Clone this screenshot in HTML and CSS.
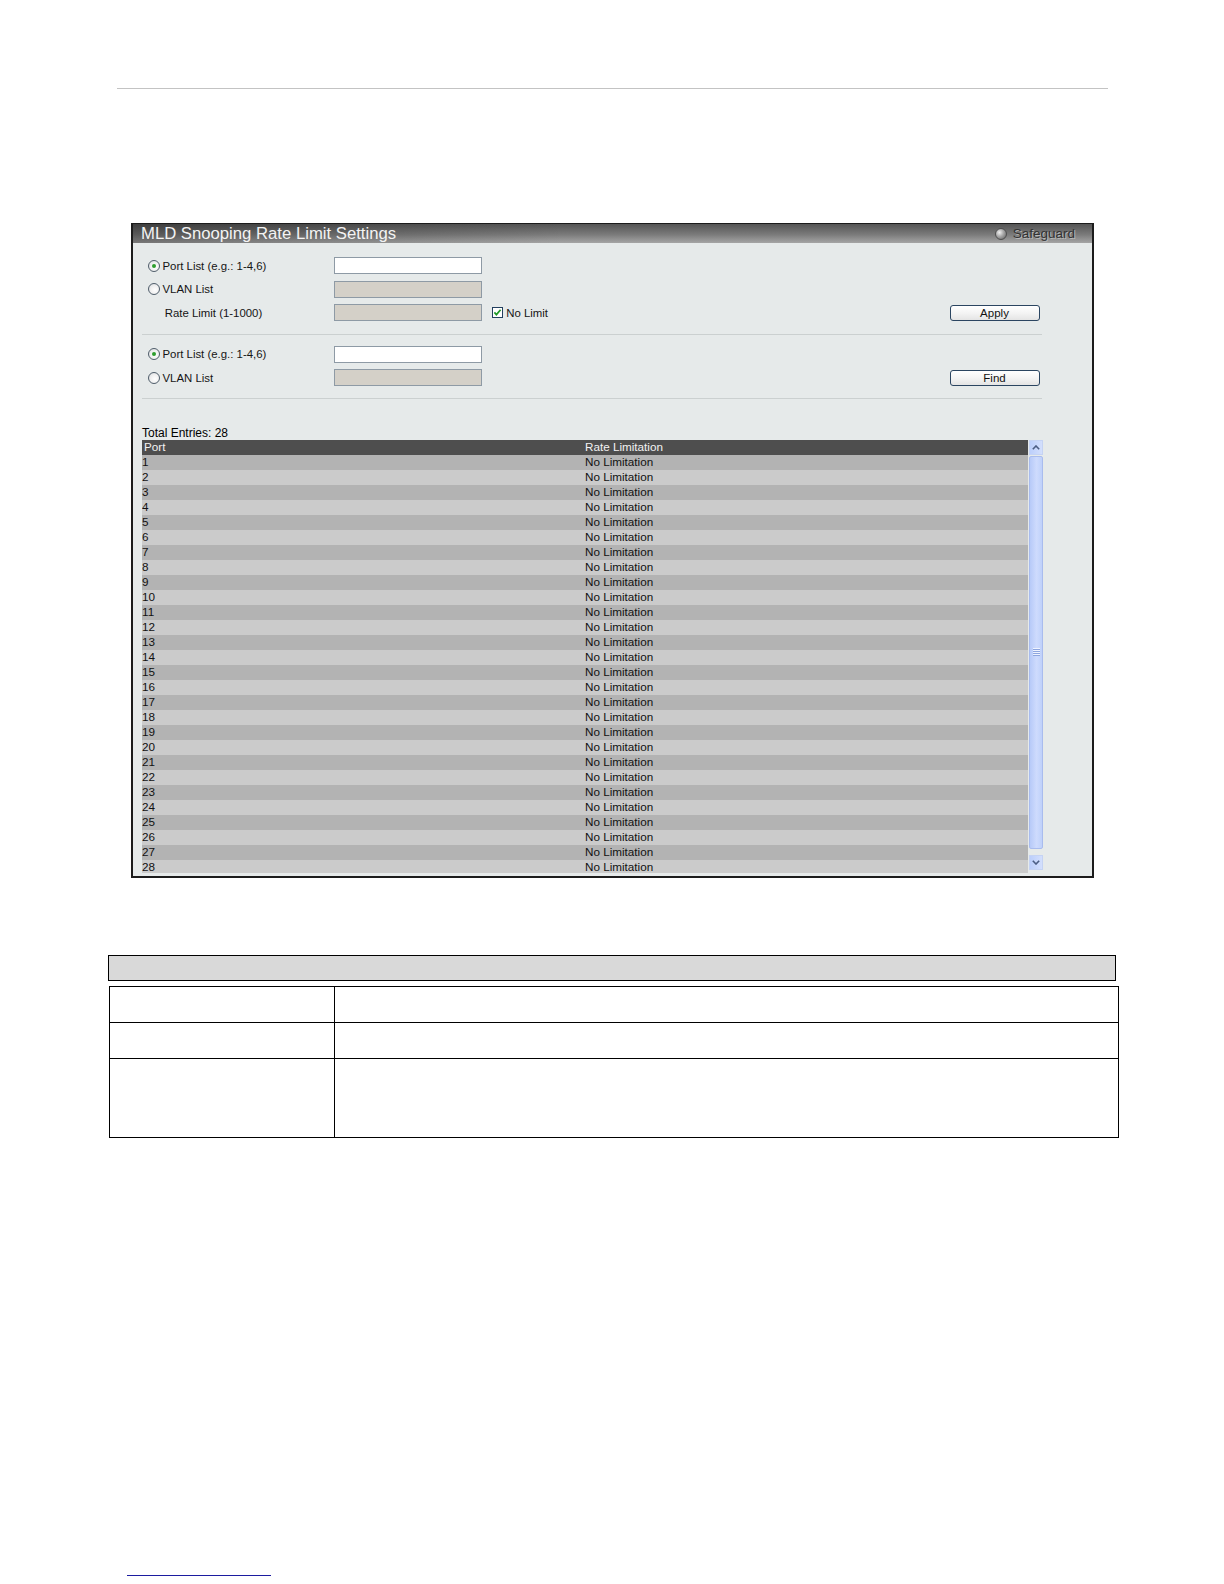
FILE: index.html
```html
<!DOCTYPE html>
<html>
<head>
<meta charset="utf-8">
<title>MLD Snooping Rate Limit Settings</title>
<link rel="stylesheet" href="styles.css">
</head>
<body>
<div class="page">
  <div class="rule"></div>

  <div class="panel">
    <div class="panel-title">
      <span class="title-text">MLD Snooping Rate Limit Settings</span>
      <span class="safeguard"><span class="sg-dot"></span>Safeguard</span>
    </div>
    <div class="panel-body">
      <div class="form">
        <div class="row">
          <div class="label"><span class="radio checked"></span>Port List (e.g.: 1-4,6)</div>
          <div class="input"></div>
        </div>
        <div class="row">
          <div class="label"><span class="radio"></span>VLAN List</div>
          <div class="input disabled"></div>
        </div>
        <div class="row">
          <div class="label indent">Rate Limit (1-1000)</div>
          <div class="input disabled"></div>
          <svg class="chk" width="11" height="11" viewBox="0 0 11 11"><rect x="0.5" y="0.5" width="10" height="10" fill="#fff" stroke="#23405e"/><path d="M2.4 5.4 L4.4 7.6 L8.6 2.8" fill="none" stroke="#1f9a26" stroke-width="1.7"/></svg>
          <span class="chk-label">No Limit</span>
          <span class="btn">Apply</span>
        </div>
      </div>
      <div class="sep"></div>
      <div class="form">
        <div class="row">
          <div class="label"><span class="radio checked"></span>Port List (e.g.: 1-4,6)</div>
          <div class="input"></div>
        </div>
        <div class="row">
          <div class="label"><span class="radio"></span>VLAN List</div>
          <div class="input disabled"></div>
          <span class="btn">Find</span>
        </div>
      </div>
      <div class="sep sep2"></div>

      <div class="total">Total Entries: 28</div>
      <div class="list">
        <div class="list-view">
          <table class="grid">
            <thead>
              <tr><th class="c1">Port</th><th>Rate Limitation</th></tr>
            </thead>
            <tbody>
              <tr><td class="c1">1</td><td>No Limitation</td></tr>
              <tr><td class="c1">2</td><td>No Limitation</td></tr>
              <tr><td class="c1">3</td><td>No Limitation</td></tr>
              <tr><td class="c1">4</td><td>No Limitation</td></tr>
              <tr><td class="c1">5</td><td>No Limitation</td></tr>
              <tr><td class="c1">6</td><td>No Limitation</td></tr>
              <tr><td class="c1">7</td><td>No Limitation</td></tr>
              <tr><td class="c1">8</td><td>No Limitation</td></tr>
              <tr><td class="c1">9</td><td>No Limitation</td></tr>
              <tr><td class="c1">10</td><td>No Limitation</td></tr>
              <tr><td class="c1">11</td><td>No Limitation</td></tr>
              <tr><td class="c1">12</td><td>No Limitation</td></tr>
              <tr><td class="c1">13</td><td>No Limitation</td></tr>
              <tr><td class="c1">14</td><td>No Limitation</td></tr>
              <tr><td class="c1">15</td><td>No Limitation</td></tr>
              <tr><td class="c1">16</td><td>No Limitation</td></tr>
              <tr><td class="c1">17</td><td>No Limitation</td></tr>
              <tr><td class="c1">18</td><td>No Limitation</td></tr>
              <tr><td class="c1">19</td><td>No Limitation</td></tr>
              <tr><td class="c1">20</td><td>No Limitation</td></tr>
              <tr><td class="c1">21</td><td>No Limitation</td></tr>
              <tr><td class="c1">22</td><td>No Limitation</td></tr>
              <tr><td class="c1">23</td><td>No Limitation</td></tr>
              <tr><td class="c1">24</td><td>No Limitation</td></tr>
              <tr><td class="c1">25</td><td>No Limitation</td></tr>
              <tr><td class="c1">26</td><td>No Limitation</td></tr>
              <tr><td class="c1">27</td><td>No Limitation</td></tr>
              <tr><td class="c1">28</td><td>No Limitation</td></tr>
            </tbody>
          </table>
        </div>
        <div class="sb">
          <div class="sb-btn"><svg width="8" height="5" viewBox="0 0 8 5"><path d="M0.8 4.2 L4 1 L7.2 4.2" fill="none" stroke="#4b5d84" stroke-width="1.6"/></svg></div>
          <div class="sb-thumb"><svg width="7" height="8" viewBox="0 0 7 8"><path d="M0 0.5 H7 M0 2.5 H7 M0 4.5 H7 M0 6.5 H7" stroke="#eef3ff" stroke-width="1"/><path d="M0 1.5 H7 M0 3.5 H7 M0 5.5 H7 M0 7.5 H7" stroke="#8ea6df" stroke-width="1"/></svg></div>
          <div class="sb-btn"><svg width="8" height="5" viewBox="0 0 8 5"><path d="M0.8 0.8 L4 4 L7.2 0.8" fill="none" stroke="#4b5d84" stroke-width="1.6"/></svg></div>
        </div>
      </div>
    </div>
  </div>

  <div class="spec-head"></div>
  <table class="spec">
    <tr class="r1"><td class="s1"></td><td></td></tr>
    <tr class="r2"><td class="s1"></td><td></td></tr>
    <tr class="r3"><td class="s1"></td><td></td></tr>
  </table>

  <div class="foot-line"></div>
</div>
</body>
</html>
```

FILE: styles.css
```css
html, body {
  margin: 0;
  padding: 0;
  background: #ffffff;
}

body {
  font-family: "Liberation Sans", Arial, sans-serif;
  color: #111;
}

.page {
  width: 1224px;
  overflow: hidden;
}

.rule {
  margin: 88px 0 0 117px;
  width: 991px;
  border-top: 1px solid #c3c3c3;
}

/* ---------- panel ---------- */
.panel {
  margin: 134px 0 0 131px;
  width: 959px;
  border: 2px solid #1c1c1c;
  border-top-width: 1px;
  background: #e6eaea;
}

.panel-title {
  height: 19px;
  display: flex;
  align-items: center;
  justify-content: space-between;
  padding: 0 17px 0 8px;
  background:
    linear-gradient(to right, rgba(0,0,0,0.28), rgba(0,0,0,0) 45%),
    linear-gradient(to bottom, #555555 0%, #7a7a7a 55%, #a5a5a5 100%);
}

.title-text {
  font-size: 16.7px;
  line-height: 19px;
  color: #f3f3f3;
  white-space: nowrap;
}

.safeguard {
  display: flex;
  align-items: center;
  gap: 6px;
  font-size: 13.5px;
  color: #333333;
  text-shadow: 1px 1px 0 #b9b9b9;
}

.sg-dot {
  width: 10px;
  height: 10px;
  border-radius: 50%;
  border: 1px solid #4e4e4e;
  background: radial-gradient(circle at 35% 35%, #f0f0f0 0%, #a6a6a6 45%, #5a5a5a 100%);
}

.panel-body {
  padding: 11px 0 2.7px 9px;
}

.form {
  width: 900px;
}

.row {
  height: 23.5px;
  display: flex;
  align-items: center;
  padding-left: 5.5px;
}

.label {
  width: 186.5px;
  flex: none;
  display: flex;
  align-items: center;
  font-size: 11.4px;
  color: #151515;
  white-space: nowrap;
}

.label.indent {
  padding-left: 17.2px;
  box-sizing: border-box;
}

.radio {
  width: 12px;
  height: 12px;
  box-sizing: border-box;
  border-radius: 50%;
  border: 1px solid #4f5d6a;
  background: radial-gradient(circle at 60% 60%, #ffffff 0%, #f0f0f0 50%, #d2d6da 100%);
  margin-right: 3px;
  display: flex;
  align-items: center;
  justify-content: center;
  flex: none;
}

.radio.checked::after {
  content: "";
  width: 4px;
  height: 4px;
  border-radius: 50%;
  background: #2e9e2e;
}

.input {
  width: 148px;
  height: 17px;
  box-sizing: border-box;
  border: 1px solid #8e9aa5;
  background: #ffffff;
  flex: none;
}

.input.disabled {
  background: #d4d0c8;
}

.chk {
  margin-left: 9.7px;
  flex: none;
}

.chk-label {
  margin-left: 3.5px;
  font-size: 11.4px;
  color: #151515;
}

.btn {
  margin-left: auto;
  margin-right: 2.5px;
  width: 90px;
  height: 16px;
  box-sizing: border-box;
  border: 1px solid #2b4561;
  border-radius: 3px;
  background: linear-gradient(to bottom, #ffffff 0%, #f4f4f4 50%, #e4e4e4 100%);
  font-size: 11.5px;
  line-height: 14px;
  text-align: center;
  color: #111;
}

.sep {
  width: 900px;
  border-top: 1px solid #cbd0d0;
  margin: 9px 0 8.2px;
}

.sep2 {
  margin: 8px 0 0;
}

.total {
  margin-top: 27px;
  font-size: 12px;
  line-height: 14px;
  color: #000;
}

/* ---------- list ---------- */
.list {
  margin-top: 0.3px;
  width: 901.3px;
  height: 433px;
  display: flex;
  gap: 1px;
}

.list-view {
  flex: 1;
  height: 433px;
  overflow: hidden;
}

.grid {
  width: 100%;
  border-collapse: collapse;
  font-size: 11.7px;
}

.grid th,
.grid td {
  height: 15px;
  padding: 0 0 0 2px;
  line-height: 13px;
  vertical-align: top;
  text-align: left;
  font-weight: normal;
  white-space: nowrap;
}

.grid td {
  padding-left: 0;
}

.grid td:last-child,
.grid th:last-child {
  padding-left: 2px;
}

.grid .c1 {
  width: 439px;
}

.grid thead tr {
  background: #4e4e4e;
  color: #f2f2f2;
}

.grid tbody tr {
  color: #111;
}

.grid tbody tr:nth-child(odd) {
  background: #b3b3b3;
}

.grid tbody tr:nth-child(even) {
  background: #cbcbcb;
}

/* ---------- scrollbar ---------- */
.sb {
  width: 14px;
  height: 430px;
  display: flex;
  flex-direction: column;
  flex: none;
}

.sb-btn {
  height: 15px;
  box-sizing: border-box;
  border: 1px solid #ffffff;
  outline: 1px solid #c5d3f3;
  outline-offset: -1px;
  background: linear-gradient(to right, #bccffb, #d3dffd);
  display: flex;
  align-items: center;
  justify-content: center;
  flex: none;
}

.sb-thumb {
  flex: 1;
  margin: 1px 0 6px;
  box-sizing: border-box;
  border: 1px solid #a9bcee;
  border-radius: 2px;
  background: linear-gradient(to right, #b7caf8 0%, #cedbfd 55%, #bfd1fa 100%);
  display: flex;
  align-items: center;
  justify-content: center;
}

/* ---------- spec table ---------- */
.spec-head {
  margin: 77.3px 0 0 108.3px;
  width: 1007.7px;
  height: 26.3px;
  box-sizing: border-box;
  border: 1px solid #000;
  background: #d9d9d9;
}

.spec {
  margin: 4.7px 0 0 109.3px;
  width: 1009.7px;
  border-collapse: collapse;
}

.spec td {
  border: 1px solid #000;
  padding: 0;
}

.spec .s1 {
  width: 224px;
}

.spec .r1 td { height: 35px; }
.spec .r2 td { height: 35px; }
.spec .r3 td { height: 78px; }

.foot-line {
  margin: 437px 0 0 126.7px;
  width: 144.3px;
  border-top: 1.5px solid #1c1ca0;
}
```
